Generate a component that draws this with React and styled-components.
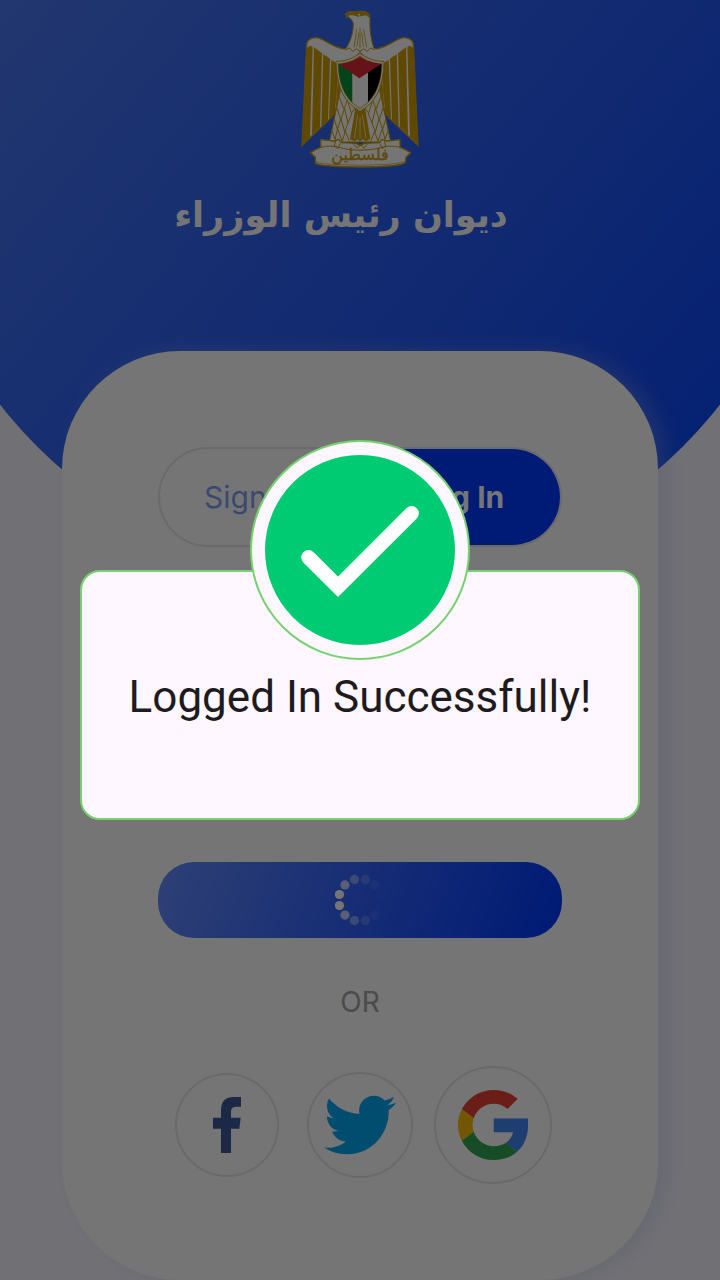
import React from "react";
import styled, { createGlobalStyle } from "styled-components";
import { FaTwitter } from "react-icons/fa";

const GlobalStyle = createGlobalStyle`
  *, *::before, *::after { box-sizing: border-box; }
  body { margin: 0; background: #f4f4ff; font-family: Inter, "Open Sans", sans-serif; }
  button { font: inherit; border: 0; padding: 0; margin: 0; background: none; cursor: pointer; }
`;

const Page = styled.div`
  display: grid;
  min-height: 100vh;
  overflow: hidden;
  background: #f4f4ff;
`;

const Backdrop = styled.div`
  grid-area: 1 / 1;
  height: 580px;
  background: linear-gradient(130deg, #4b78f2 0%, #003ffb 108%);
  clip-path: circle(457px at 50% 123px);
`;

const Content = styled.div`
  grid-area: 1 / 1;
  z-index: 1;
  display: flex;
  flex-direction: column;
`;

const Header = styled.header`
  display: flex;
  flex-direction: column;
  align-items: center;
  height: 351px;
`;

const Title = styled.h1`
  margin: 0 38px 0 0;
  color: #fff;
  font: 700 35px/80px "DejaVu Sans", sans-serif;
  white-space: nowrap;
`;

const Card = styled.main`
  flex: 1;
  display: flex;
  flex-direction: column;
  margin: 0 62px;
  padding: 96px;
  border-radius: 118px;
  background: #fff;
  box-shadow: 10px 0 20px rgba(190, 190, 230, 0.3);
`;

const Tabs = styled.div`
  display: flex;
  height: 100px;
  margin-bottom: 315px;
  border: 2px solid #e6e6e6;
  border-radius: 50px;
`;

const Tab = styled.button`
  && {
    flex: 1;
    border-radius: 48px;
    font-size: 30px;
    font-weight: ${(p) => (p.$active ? 700 : 400)};
    color: ${(p) => (p.$active ? "#fff" : "#7f9ff5")};
    background: ${(p) => (p.$active ? "#003bff" : "transparent")};
  }
`;

const SubmitButton = styled.button`
  && {
    display: flex;
    align-items: center;
    justify-content: center;
    height: 76px;
    border-radius: 36px;
    background: linear-gradient(110deg, #658bff 0%, #003bff 98%);
  }
`;

const Divider = styled.p`
  margin: 46px 0;
  color: #a3a3a3;
  font-size: 28px;
  line-height: 36px;
  text-align: center;
`;

const SocialRow = styled.div`
  display: grid;
  grid-template-columns: repeat(3, 133px);
  justify-content: center;
  place-items: center;
  height: 118px;
`;

const SocialButton = styled.button`
  && {
    display: grid;
    place-items: center;
    width: ${(p) => p.$size}px;
    height: ${(p) => p.$size}px;
    border: 2px solid #e6e6e6;
    border-radius: 50%;
  }
`;

const Scrim = styled.div`
  position: fixed;
  inset: 0;
  z-index: 2;
  display: flex;
  align-items: center;
  padding: 0 80px;
  background: rgba(0, 0, 0, 0.54);
`;

const Dialog = styled.div`
  flex: 1;
  display: flex;
  flex-direction: column;
  align-items: center;
  height: 250px;
  margin-top: 110px;
  border: 2px solid #77d170;
  border-radius: 20px;
  background: #fef7ff;
`;

const Badge = styled.div`
  display: grid;
  place-items: center;
  flex: none;
  width: 220px;
  height: 220px;
  margin-top: -132px;
  border: 2px solid #77d170;
  border-radius: 50%;
  background: #fef7ff;
`;

const Message = styled.p`
  margin: 5px 0 0;
  color: #1d1b20;
  font: 400 44px/64px Roboto, sans-serif;
  white-space: nowrap;
`;

const GOLD = "#cf9f00";

function WingHalf() {
  return (
    <g>
      <path
        d="M50 132C54 113 78 108 96 118C120 132 146 148 172 148L210 165V330L150 300L125 352L36 436Z"
        fill="#fff"
        stroke={GOLD}
        strokeWidth="4"
      />
      <g fill={GOLD}>
        <path d="M49 146Q56 134 68 140L60 410L37 434Z" />
        <path d="M72 142L96 160L90 382L66 406Z" />
        <path d="M100 163L120 176L114 360L94 379Z" />
        <path d="M124 180L138 188L144 232L134 344L117 358Z" />
        <path d="M145 236L155 268L137 332L140 280Z" />
      </g>
    </g>
  );
}

function LegHalf() {
  return (
    <g fill="none" stroke={GOLD} strokeWidth="3">
      <path d="M151 270L118 426H210V300Z" fill="#fff" />
      <path d="M148 292L162 328L172 300L184 340L196 322M140 322L152 358L164 326L174 368L186 340M132 356L142 388L153 356L164 396L175 366M125 390L135 418L143 386L156 424L166 394L178 424" />
    </g>
  );
}

function Emblem() {
  return (
    <svg width="140" height="175" viewBox="0 0 420 525" role="img" aria-label="فلسطين">
      <WingHalf />
      <g transform="matrix(-1 0 0 1 420 0)">
        <WingHalf />
      </g>
      <LegHalf />
      <g transform="matrix(-1 0 0 1 420 0)">
        <LegHalf />
      </g>
      <path d="M196 325L180 418L194 424L204 418L210 424L218 418L228 424L241 416L225 325Z" fill={GOLD} />
      <path d="M203 345L193 416M217 345L228 416M210 352V416" stroke="#fff" strokeWidth="2" />
      <path
        d="M167 44C170 34 184 34 196 35C222 30 240 36 240 54C238 92 244 126 254 150L242 144L232 154L221 146L210 155L200 146L188 154L178 144L165 150C184 122 190 96 190 70C184 54 172 48 167 44Z"
        fill="#fff"
        stroke={GOLD}
        strokeWidth="3"
      />
      <path d="M178 143L188 150L200 141L210 158L176 172L150 160L166 146ZM242 143L232 150L221 141L210 158L244 172L268 158L254 146Z" fill="#fff" />
      <path d="M165 150L178 144L188 154L200 146L210 155L221 146L232 154L242 144L254 150" fill="none" stroke={GOLD} strokeWidth="3" />
      <path d="M166 44C166 34 180 34 196 36C222 30 240 38 240 55L228 46L204 50L190 46L178 46L170 57Z" fill={GOLD} />
      <circle cx="207" cy="44" r="3" fill="#fff" />
      <path d="M200 88L192 142M210 84V146M221 88L230 142M206 98L201 140M215 98L220 140" stroke={GOLD} strokeWidth="2.5" />
      <path d="M210 160C184 178 164 184 138 184C140 252 156 304 210 334C264 304 280 252 282 184C256 184 236 178 210 160Z" fill="#fff" stroke={GOLD} strokeWidth="3" />
      <path d="M210 167C186 183 166 189 143 190C145 248 162 299 210 327C258 299 275 248 277 190C254 189 234 183 210 167Z" fill={GOLD} />
      <clipPath id="shield">
        <path d="M210 170C186 185 166 191 145 192C147 248 163 297 210 324C257 297 273 248 275 192C254 191 234 185 210 170Z" />
      </clipPath>
      <g clipPath="url(#shield)">
        <path d="M140 160H187V330H140Z" fill="#009639" />
        <path d="M187 160H234V330H187Z" fill="#fff" />
        <path d="M234 160H280V330H234Z" fill="#000" />
        <path d="M140 160H280V188L208 235L140 188Z" fill="#dc2a30" />
      </g>
      <g fill="#fff" stroke={GOLD} strokeWidth="4" strokeLinejoin="round">
        <path d="M92 419L132 423L146 418L154 428L198 430L210 436L224 430L268 428L276 418L290 423L330 419L330 442L344 448L362 458L348 472L346 488Q330 496 300 498Q210 504 122 498Q92 496 76 490L76 472L62 458L78 448L92 442Z" />
        <path d="M92 442C132 432 154 446 180 449Q210 452 240 449C270 446 292 432 330 442M137 423L133 438L143 446L151 430M283 423L287 438L277 446L269 430M190 432L202 444L212 434L222 445L232 432" fill="none" strokeWidth="3" />
        <path d="M78 486Q100 492 124 493Q210 498 298 493Q326 491 344 484" fill="none" strokeWidth="2" />
      </g>
      <text x="210" y="480" textAnchor="middle" fill={GOLD} stroke={GOLD} strokeWidth="1" fontFamily="DejaVu Sans, sans-serif" fontSize="48">
        فلسطين
      </text>
    </svg>
  );
}

const DOT_OPACITIES = [0.2, 0.08, 0.02, 0, 0.07, 0.2, 0.4, 0.7, 1, 1, 0.7, 0.4];

function Spinner() {
  return (
    <svg width="52" height="52" viewBox="-26 -26 52 52" role="img" aria-label="Loading">
      {DOT_OPACITIES.map((opacity, i) => {
        const angle = ((i * 30 - 75) * Math.PI) / 180;
        return <circle key={i} cx={21.3 * Math.cos(angle)} cy={21.3 * Math.sin(angle)} r="4.6" fill="#fff" opacity={opacity} />;
      })}
    </svg>
  );
}

function FacebookIcon() {
  return (
    <svg width="28" height="56" viewBox="0 0 84 168" aria-hidden="true">
      <path d="M84 0V29H70Q54 29 54 43V62H83L79 95H54V168H24V95H0V62H24V40Q24 0 63 0Z" fill="#3b5998" />
    </svg>
  );
}

function TwitterIcon() {
  return <FaTwitter size={72} color="#03a9f4" aria-hidden="true" />;
}

function GoogleIcon() {
  return (
    <svg width="70" height="70" viewBox="0 0 47 48" preserveAspectRatio="none" aria-hidden="true">
      <path fill="#ea4335" d="M24 9.5c3.54 0 6.71 1.22 9.21 3.6l6.85-6.85C35.9 2.38 30.47 0 24 0 14.62 0 6.51 5.38 2.56 13.22l7.98 6.19C12.43 13.72 17.74 9.5 24 9.5z" />
      <path fill="#4285f4" d="M47 19.5H24v9.52h12.94c-.58 2.96-2.26 5.48-4.78 7.18l7.73 6C44.4 38.02 47 31.84 47 24.55z" />
      <path fill="#fbbc05" d="M10.53 28.59c-.48-1.45-.76-2.99-.76-4.59s.27-3.14.76-4.59l-7.98-6.19C.92 16.46 0 20.12 0 24c0 3.88.92 7.54 2.56 10.78l7.97-6.19z" />
      <path fill="#34a853" d="M24 48c6.48 0 11.93-2.13 15.89-5.81l-7.73-6c-2.15 1.45-4.92 2.3-8.16 2.3-6.26 0-11.57-4.22-13.47-9.91l-7.98 6.19C6.51 42.62 14.62 48 24 48z" />
    </svg>
  );
}

function CheckIcon() {
  return (
    <svg width="190" height="190" viewBox="0 0 190 190" aria-hidden="true">
      <circle cx="95" cy="95" r="95" fill="#00ca72" />
      <path d="M43.5 102.3L73 131.8L146.6 58.3" fill="none" stroke="#fff" strokeWidth="14.6" strokeLinecap="round" />
    </svg>
  );
}

export default function App() {
  return (
    <>
      <GlobalStyle />
      <Page>
        <Backdrop />
        <Content>
          <Header>
            <Emblem />
            <Title lang="ar" dir="rtl">ديوان رئيس الوزراء</Title>
          </Header>
          <Card>
            <Tabs>
              <Tab type="button">Sign Up</Tab>
              <Tab type="button" $active>Log In</Tab>
            </Tabs>
            <SubmitButton type="submit">
              <Spinner />
            </SubmitButton>
            <Divider>OR</Divider>
            <SocialRow>
              <SocialButton type="button" aria-label="Facebook" $size={104}>
                <FacebookIcon />
              </SocialButton>
              <SocialButton type="button" aria-label="Twitter" $size={106}>
                <TwitterIcon />
              </SocialButton>
              <SocialButton type="button" aria-label="Google" $size={118}>
                <GoogleIcon />
              </SocialButton>
            </SocialRow>
          </Card>
        </Content>
      </Page>
      <Scrim>
        <Dialog role="dialog" aria-modal="true" aria-labelledby="dialog-message">
          <Badge>
            <CheckIcon />
          </Badge>
          <Message id="dialog-message">Logged In Successfully!</Message>
        </Dialog>
      </Scrim>
    </>
  );
}
